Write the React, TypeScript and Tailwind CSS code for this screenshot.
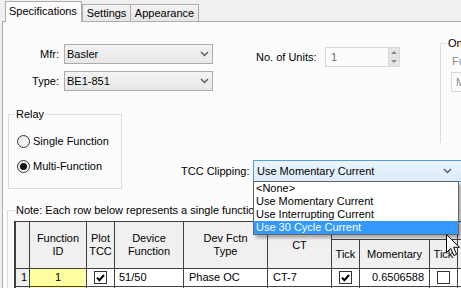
import React from 'react'

function Chevron() {
  return (
    <svg width="9" height="6" viewBox="0 0 9 6">
      <path d="M1 1 L4.5 4.5 L8 1" fill="none" stroke="#5e5e5e" strokeWidth="1.5" />
    </svg>
  )
}

function Checkbox({ checked }: { checked?: boolean }) {
  return (
    <span className="flex w-[13px] h-[13px] items-center justify-center border border-[#333] bg-white">
      {checked && (
        <svg width="9" height="8" viewBox="0 0 9 8">
          <path d="M1 3.6 L3.4 6.2 L8 1" fill="none" stroke="#000" strokeWidth="2" />
        </svg>
      )}
    </span>
  )
}

function Radio({ on }: { on?: boolean }) {
  return (
    <span className="flex w-[13px] h-[13px] shrink-0 items-center justify-center rounded-full border border-[#333] bg-gradient-to-br from-[#e4e4e4] to-white">
      {on && <span className="w-[7px] h-[7px] rounded-full bg-[#111]" />}
    </span>
  )
}

function GroupLabel({ children, className = '' }: { children: React.ReactNode; className?: string }) {
  return (
    <span className={`block w-fit -mt-[7px] px-[1px] bg-[#fcfcfc] leading-[13px] ${className}`}>{children}</span>
  )
}

const cell = 'border-r border-b border-[#404040]'
const head = `${cell} bg-[#f0f0f0] flex items-center justify-center text-center`

export default function App() {
  return (
    <div className="relative w-[461px] h-[288px] overflow-hidden bg-[#f0f0f0] text-[11px] leading-[13px] text-black font-['Liberation_Sans',sans-serif]">
      {/* Tabs */}
      <div className="flex items-end h-[22px] ml-[2px] pl-[3px] border-b border-[#adadad]">
        <div className="relative z-10 -mb-px w-[77px] h-[21px] pl-[3px] pt-[3px] border border-b-0 border-[#adadad] bg-[#fcfcfc]">
          Specifications
        </div>
        <div className="w-[48px] h-[17px] pt-[2px] text-center border-l border-t border-[#adadad] bg-gradient-to-b from-[#f2f2f2] to-[#e6e6e6]">
          Settings
        </div>
        <div className="w-[69px] h-[17px] pt-[2px] text-center border-l border-t border-r border-[#adadad] bg-gradient-to-b from-[#f2f2f2] to-[#e6e6e6]">
          Appearance
        </div>
      </div>

      {/* Page */}
      <div className="ml-[2px] h-[266px] border-l border-[#adadad] bg-[#fcfcfc] overflow-hidden">
        {/* Top row */}
        <div className="flex items-start h-[86px]">
          <div className="shrink-0 mt-[22px] flex flex-col gap-[7px]">
            {[['Mfr:', 'Basler'], ['Type:', 'BE1-851']].map(([label, value]) => (
              <div key={label} className="flex items-center">
                <span className="w-[56px] text-right">{label}</span>
                <div className="ml-[5px] w-[149px] h-[20px] flex items-center justify-between pl-[2px] pr-[3px] border border-[#acacac] bg-gradient-to-b from-[#f3f3f3] to-[#e8e8e8]">
                  <span>{value}</span>
                  <Chevron />
                </div>
              </div>
            ))}
          </div>

          <div className="shrink-0 ml-[43px] mt-[25px] flex items-center">
            <span className="w-[69px]">No. of Units:</span>
            <div className="w-[64px] h-[20px] flex items-center pl-[5px] border border-[#d9d9d9] bg-[#fcfcfc] text-[#6d6d6d]">1</div>
            <div className="w-[11px] h-[20px] flex flex-col border border-l-0 border-[#d9d9d9]">
              <div className="flex-1 flex items-center justify-center bg-[#e6e6e6] border-b border-[#d9d9d9]">
                <span className="w-0 h-0 border-x-[3px] border-x-transparent border-b-[3px] border-b-[#8a8a8a]" />
              </div>
              <div className="flex-1 flex items-center justify-center bg-[#e6e6e6]">
                <span className="w-0 h-0 border-x-[3px] border-x-transparent border-t-[3px] border-t-[#8a8a8a]" />
              </div>
            </div>
          </div>

          <div className="shrink-0 ml-[40px] mt-[21px] w-[80px] h-[100px] border-l border-t border-[#dcdcdc]">
            <GroupLabel className="ml-[6px]">On-Line</GroupLabel>
            <div className="ml-[11px] mt-[5px] text-[#8c8c8c]">Fuse Type:</div>
            <div className="ml-[10px] mt-[4px] h-[20px] flex items-center pl-[4px] border border-[#d9d9d9] bg-[#fcfcfc] text-[#8c8c8c]">M</div>
          </div>
        </div>

        {/* Relay + TCC */}
        <div className="flex items-start">
          <div className="shrink-0 ml-[5px] mt-[6px] w-[114px] h-[75px] border border-[#dcdcdc]">
            <GroupLabel className="ml-[6px]">Relay</GroupLabel>
            <div className="ml-[8px] mt-[12px] h-[16px] flex items-center gap-[3px]">
              <Radio />
              <span>Single Function</span>
            </div>
            <div className="ml-[8px] mt-[9px] h-[16px] flex items-center gap-[3px]">
              <Radio on />
              <span>Multi-Function</span>
            </div>
          </div>

          <div className="shrink-0 ml-[59px] mt-[52px] flex items-center">
            <span className="w-[72px]">TCC Clipping:</span>
            <div className="relative z-20">
              <div className="w-[210px] h-[22px] flex items-center justify-between pl-[3px] pr-[10px] border border-[#569de5] bg-gradient-to-b from-[#ebf4fc] to-[#dcecfc]">
                <span>Use Momentary Current</span>
                <Chevron />
              </div>
              <div className="absolute left-0 top-[21px] w-[206px] border border-[#646464] bg-white shadow-[3px_3px_3px_rgba(0,0,0,0.3)]">
                <div className="h-[13px] pl-[2px]">&lt;None&gt;</div>
                <div className="h-[13px] pl-[2px]">Use Momentary Current</div>
                <div className="h-[13px] pl-[2px]">Use Interrupting Current</div>
                <div className="h-[13px] pl-[2px] bg-[#3399ff] text-white">Use 30 Cycle Current</div>
              </div>
            </div>
          </div>
        </div>

        {/* Note group + grid */}
        <div className="ml-[4px] mt-[21px] w-[500px] h-[100px] border-l border-t border-[#dcdcdc]">
          <GroupLabel className="ml-[7px] whitespace-nowrap">
            Note: Each row below represents a single function
          </GroupLabel>
          <div className="ml-[6px] mt-[4px] w-fit grid grid-cols-[14px_57px_28px_69px_84px_64px_28px_70px_28px_70px] grid-rows-[18px_29px_18px_18px] border-l-2 border-t border-[#404040]">
            <div className={`${head} row-span-2`} />
            <div className={`${head} row-span-2`}>Function<br />ID</div>
            <div className={`${head} row-span-2`}>Plot<br />TCC</div>
            <div className={`${head} row-span-2`}>Device<br />Function</div>
            <div className={`${head} row-span-2`}>Dev Fctn<br />Type</div>
            <div className={`${head} row-span-2`}>CT</div>
            <div className={`${head} col-span-3`} />
            <div className={`${head} col-span-1`} />
            <div className={head}>Tick</div>
            <div className={head}>Momentary</div>
            <div className={head}>Tick</div>
            <div className={head}>Interrupting</div>

            <div className={`${cell} bg-[#f0f0f0] flex items-center pl-[5px]`}>1</div>
            <div className={`${cell} bg-[#ffffa0] flex items-center justify-center`}>1</div>
            <div className={`${cell} bg-white flex items-center justify-center`}><Checkbox checked /></div>
            <div className={`${cell} bg-white flex items-center pl-[4px]`}>51/50</div>
            <div className={`${cell} bg-white flex items-center pl-[5px]`}>Phase OC</div>
            <div className={`${cell} bg-white flex items-center pl-[5px]`}>CT-7</div>
            <div className={`${cell} bg-white flex items-center justify-center`}><Checkbox checked /></div>
            <div className={`${cell} bg-white flex items-center justify-end pr-[5px]`}>0.6506588</div>
            <div className={`${cell} bg-white flex items-center justify-center`}><Checkbox /></div>
            <div className={`${cell} bg-white`} />

            <div className={`${cell} bg-[#f0f0f0]`} />
            <div className={`${cell} bg-[#ffffa0]`} />
            <div className={`${cell} bg-white`} />
            <div className={`${cell} bg-white`} />
            <div className={`${cell} bg-white`} />
            <div className={`${cell} bg-white`} />
            <div className={`${cell} bg-white`} />
            <div className={`${cell} bg-white`} />
            <div className={`${cell} bg-white`} />
            <div className={`${cell} bg-white`} />
          </div>
        </div>
      </div>

      {/* Mouse pointer */}
      <svg className="absolute left-[446px] top-[234px] z-30" width="14" height="23" viewBox="0 0 14 23">
        <path d="M0.5 0.5 L0.5 18.5 L4.8 14.3 L7.8 21.5 L10.6 20.3 L7.6 13.3 L13.5 13.3 Z" fill="#fff" stroke="#000" strokeWidth="1" />
      </svg>
    </div>
  )
}
